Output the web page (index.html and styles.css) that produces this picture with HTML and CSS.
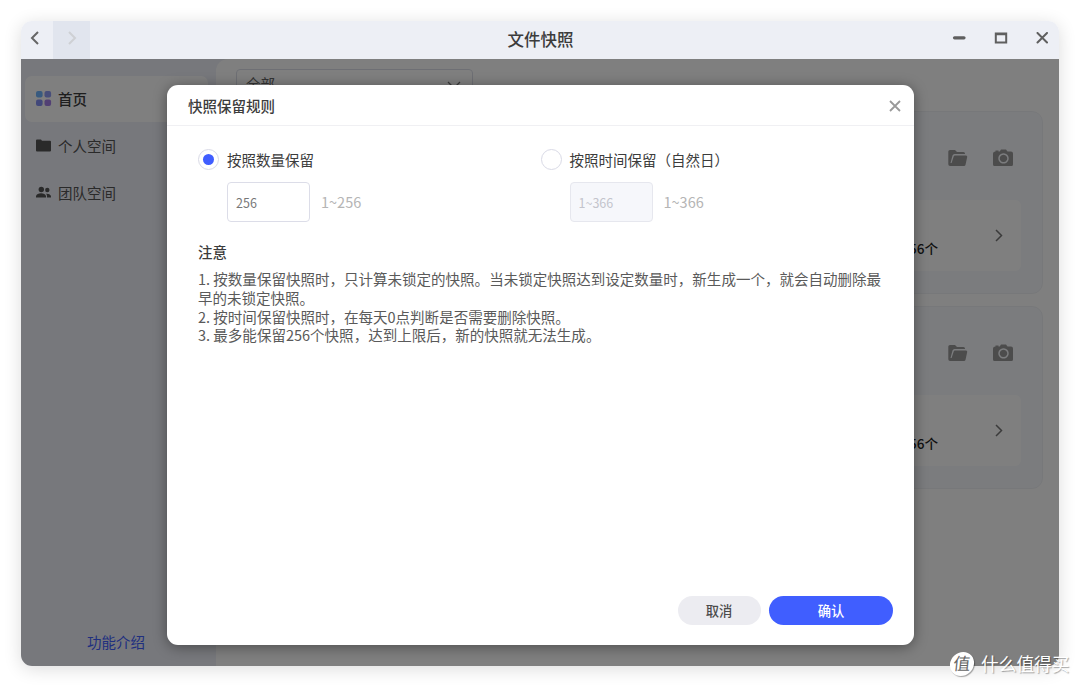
FILE: index.html
```
<!DOCTYPE html>
<html lang="zh-CN">
<head>
    <meta charset="UTF-8">
    <meta name="viewport" content="width=device-width, initial-scale=1.0">
    <title>文件快照</title>
    <link rel="stylesheet" href="styles.css">
</head>
<body>
    <svg class="symbols" width="0" height="0">
        <symbol id="folder-open" viewBox="0 0 20 18">
            <path d="M2 1h5l2 2h6.500q1.500 0 1.500 1.500V5H6.500Q5 5 4.500 6.500L2.500 14H3.600L5.700 7.500Q6 6.500 7 6.500h11q1.500 0 1.200 1.500l-1.600 7.500Q17.300 17 16 17H2Q.3 17 .3 15.300V2.600Q.3 1 2 1z"/>
        </symbol>
        <symbol id="camera" viewBox="0 0 20 18">
            <path fill-rule="evenodd" d="M2.500 1.500h3v1h1.200L8 .5h5l1.500 2H18q2 0 2 2V15.500q0 1.500-1.500 1.500h-17Q0 17 0 15.500v-11q0-2 2.500-2zM10.500 4.200a5.200 5.200 0 1 0 .01 0zM10.500 5.700a3.700 3.700 0 1 1-.01 0z"/>
        </symbol>
        <symbol id="chevron" viewBox="0 0 8 13">
            <path d="M1 1l5.500 5.500L1 12" fill="none" stroke="currentColor" stroke-width="1.500"/>
        </symbol>
    </svg>

    <div class="window">
        <div class="titlebar">
            <div class="nav-button">
                <svg width="10" height="14" viewBox="0 0 10 14"><path d="M8 1L2 7l6 6"/></svg>
            </div>
            <div class="nav-button disabled">
                <svg width="10" height="14" viewBox="0 0 10 14"><path d="M2 1l6 6-6 6"/></svg>
            </div>
            <div class="title">文件快照</div>
            <div class="window-buttons">
                <svg width="14" height="12" viewBox="0 0 14 12"><path class="thick" d="M2.500 5.800h9.500"/></svg>
                <svg width="14" height="12" viewBox="0 0 14 12"><path d="M1.800 1.500h10.400v9H1.800zM1.800 2.200h10.400"/></svg>
                <svg width="14" height="12" viewBox="0 0 14 12"><path d="M2.500 1l9.500 9.500M12 1L2.500 10.500" stroke-linecap="round"/></svg>
            </div>
        </div>

        <div class="content">
            <div class="sidebar">
                <div class="menu-item active">
                    <svg width="16" height="16" viewBox="0 0 16 16">
                        <rect x="0" y="0" width="6.600" height="6.600" rx="2" fill="#70b5ff"/>
                        <rect x="8.500" y="0" width="6.600" height="6.600" rx="2" fill="#8f9cf5"/>
                        <rect x="0" y="8.500" width="6.600" height="6.600" rx="2" fill="#8590f5"/>
                        <rect x="8.500" y="8.500" width="6.600" height="6.600" rx="2" fill="#a580e8"/>
                    </svg>
                    <span>首页</span>
                </div>
                <div class="menu-item">
                    <svg width="16" height="16" viewBox="0 0 16 16"><path d="M1 1.500h4l1 1.200h8q1 0 1 1V12.500q0 1-1 1H1q-1 0-1-1V2.500q0-1 1-1z"/></svg>
                    <span>个人空间</span>
                </div>
                <div class="menu-item">
                    <svg width="16" height="16" viewBox="0 0 16 16"><circle cx="5.300" cy="4.500" r="2.700"/><circle cx="11.300" cy="5" r="2.200"/><path d="M0 12.500v-1.500Q1 8.300 5 8.300t5 2.700v1.500zM10 8.800Q14.500 8.500 15 11.500v1h-4v-1.500Q11 9.700 10 8.800z"/></svg>
                    <span>团队空间</span>
                </div>
                <a class="intro-link">功能介绍</a>
            </div>

            <div class="main">
                <div class="select">
                    <span>全部</span>
                    <svg width="14" height="8" viewBox="0 0 14 8"><path d="M1 1l6 6 6-6"/></svg>
                </div>
                <div class="card">
                    <div class="card-actions">
                        <svg width="20" height="18"><use href="#folder-open"/></svg>
                        <svg width="20" height="18"><use href="#camera"/></svg>
                    </div>
                    <div class="card-info">
                        <span class="count">256个</span>
                        <svg width="8" height="13"><use href="#chevron"/></svg>
                    </div>
                </div>
                <div class="card">
                    <div class="card-actions">
                        <svg width="20" height="18"><use href="#folder-open"/></svg>
                        <svg width="20" height="18"><use href="#camera"/></svg>
                    </div>
                    <div class="card-info">
                        <span class="count">256个</span>
                        <svg width="8" height="13"><use href="#chevron"/></svg>
                    </div>
                </div>
            </div>

            <div class="overlay">
                <div class="dialog">
                    <div class="dialog-header">
                        <h2>快照保留规则</h2>
                        <svg width="12" height="12" viewBox="0 0 12 12"><path d="M1 1l10 10M11 1L1 11"/></svg>
                    </div>
                    <div class="dialog-body">
                        <div class="options">
                            <div class="option">
                                <label><span class="radio checked"></span>按照数量保留</label>
                                <div class="field">
                                    <input type="text" value="256">
                                    <span>1~256</span>
                                </div>
                            </div>
                            <div class="option">
                                <label><span class="radio"></span>按照时间保留（自然日）</label>
                                <div class="field">
                                    <input type="text" placeholder="1~366" disabled>
                                    <span>1~366</span>
                                </div>
                            </div>
                        </div>
                        <h3>注意</h3>
                        <p>1. 按数量保留快照时，只计算未锁定的快照。当未锁定快照达到设定数量时，新生成一个，就会自动删除最早的未锁定快照。</p>
                        <p>2. 按时间保留快照时，在每天0点判断是否需要删除快照。</p>
                        <p>3. 最多能保留256个快照，达到上限后，新的快照就无法生成。</p>
                    </div>
                    <div class="dialog-footer">
                        <button class="cancel">取消</button>
                        <button class="confirm">确认</button>
                    </div>
                </div>
            </div>
        </div>
    </div>

    <div class="watermark">
        <span class="watermark-logo">值</span>
        <span>什么值得买</span>
    </div>
</body>
</html>
```
FILE: styles.css
```
* {
    box-sizing: border-box;
}
body {
    margin: 0;
    padding: 21px;
    height: 687px;
    overflow: hidden;
    background: #fff;
    font-family: "Noto Sans CJK SC", sans-serif;
    font-size: 14.5px;
    color: #3c3c3c;
}
svg {
    display: block;
    flex: none;
}
.symbols {
    position: absolute;
}
.window {
    width: 1038px;
    height: 645px;
    border-radius: 11px;
    background: #fff;
    overflow: hidden;
    box-shadow: 0 3px 18px rgba(0, 0, 0, 0.14);
}
.titlebar {
    display: flex;
    height: 38px;
    background: #edeff5;
}
.nav-button {
    display: flex;
    align-items: center;
    justify-content: center;
    width: 37px;
    height: 38px;
    padding-bottom: 4px;
}
.nav-button:first-child {
    width: 32px;
    padding-right: 4px;
}
.nav-button.disabled {
    background: #e1e5ee;
}
.nav-button path {
    fill: none;
    stroke: #666;
    stroke-width: 2;
}
.nav-button.disabled path {
    stroke: #ced0d4;
}
.title {
    flex: 1;
    padding-left: 39px;
    text-align: center;
    line-height: 37px;
    font-size: 16.5px;
    font-weight: 500;
}
.window-buttons {
    display: flex;
    align-items: center;
    gap: 27.5px;
    padding-right: 10px;
    padding-bottom: 5px;
}
.window-buttons path {
    fill: none;
    stroke: #5f5f5f;
    stroke-width: 2;
}
.window-buttons .thick {
    stroke-width: 3.2;
    stroke-linecap: round;
}
.content {
    position: relative;
    display: flex;
    height: 607px;
    background: #eff1f9;
}
.sidebar {
    display: flex;
    flex-direction: column;
    width: 195px;
    padding: 17px 8px 13px 4px;
}
.menu-item {
    display: flex;
    align-items: center;
    gap: 6px;
    height: 46px;
    margin-bottom: 1px;
    padding-left: 11px;
    border-radius: 7px;
    color: #555;
}
.menu-item span {
    padding-bottom: 2px;
}
.menu-item path,
.menu-item circle {
    fill: #555;
}
.menu-item.active {
    background: #fff;
    color: #3c3c3c;
    font-weight: 500;
}
.intro-link {
    margin: auto 0 0 62px;
    line-height: 22px;
    color: #405eff;
}
.main {
    flex: 1;
    padding: 10px 16px 0 20px;
    border-top-left-radius: 12px;
    background: #fff;
}
.select {
    display: flex;
    align-items: center;
    justify-content: space-between;
    width: 237px;
    height: 31px;
    margin-bottom: 11px;
    padding: 0 11px 0 9px;
    border: 1px solid #dcdfe9;
    border-radius: 4px;
    color: #666;
}
.select span {
    padding-bottom: 2px;
}
.select path {
    fill: none;
    stroke: #777;
    stroke-width: 1.3;
}
.card {
    height: 183px;
    margin-bottom: 12px;
    padding: 37px 21px 0;
    border: 1px solid #eff1f5;
    border-radius: 11px;
    background: #f7f9fd;
}
.card-actions {
    display: flex;
    justify-content: flex-end;
    gap: 25px;
    height: 51px;
    padding-right: 8px;
    fill: #999;
}
.card-info {
    display: flex;
    align-items: center;
    justify-content: flex-end;
    gap: 57px;
    height: 71px;
    padding-right: 18px;
    border-radius: 6px;
    background: #fff;
    color: #777;
}
.count {
    padding-top: 25px;
    font-size: 13.6px;
    font-weight: 500;
    color: #222;
}
.overlay {
    position: absolute;
    inset: 0;
    padding: 26px 0 0 146px;
    background: rgba(0, 0, 0, 0.5);
}
.dialog {
    display: flex;
    flex-direction: column;
    width: 747px;
    height: 560px;
    border-radius: 11px;
    background: #fff;
    box-shadow: 0 2px 14px rgba(0, 0, 0, 0.4);
}
.dialog-header {
    display: flex;
    align-items: center;
    justify-content: space-between;
    height: 41px;
    padding: 2px 13px 0 21px;
    border-bottom: 1px solid #f0f0f3;
}
.dialog-header path {
    stroke: #999;
    stroke-width: 1.8;
}
h2,
h3 {
    margin: 0;
    font-size: 14.5px;
    font-weight: 500;
}
.dialog-header h2 {
    padding-bottom: 2px;
}
.dialog-body {
    flex: 1;
    padding: 22px 29px 0 31px;
}
.options {
    display: grid;
    grid-template-columns: 342.5px 1fr;
}
.option label {
    display: flex;
    align-items: center;
    gap: 8px;
    height: 22px;
}
.radio {
    display: flex;
    align-items: center;
    justify-content: center;
    width: 21px;
    height: 21px;
    border: 1px solid #d9dae6;
    border-radius: 50%;
}
.radio.checked::after {
    content: "";
    width: 11px;
    height: 11px;
    border-radius: 50%;
    background: #405eff;
}
.field {
    display: flex;
    align-items: center;
    gap: 11px;
    margin: 12px 0 0 29px;
    color: #b5b5b5;
}
.field span {
    padding-bottom: 2px;
}
.field input {
    width: 83px;
    height: 40px;
    padding: 0 8px;
    border: 1px solid #dcdde8;
    border-radius: 4px;
    background: #fff;
    font-family: inherit;
    font-size: 12.5px;
    color: #777;
}
.field input:disabled {
    border-color: #e6e7ee;
    background: #f6f7fb;
}
.field input::placeholder {
    color: #c3c4cc;
}
h3 {
    margin: 19px 0 7px;
    line-height: 22px;
}
p {
    margin: 0;
    line-height: 18.8px;
    font-size: 14.53px;
    color: #5a5a5a;
}
.dialog-footer {
    display: flex;
    justify-content: flex-end;
    gap: 8.5px;
    padding: 0 21px 20px;
}
button {
    width: 83px;
    height: 29px;
    padding: 0 0 1px;
    border: none;
    border-radius: 15px;
    font-family: inherit;
    font-size: 13.3px;
    font-weight: 500;
}
.cancel {
    background: #ececf1;
    color: #4c4c4c;
}
.confirm {
    width: 124px;
    background: #405eff;
    color: #fff;
}
.watermark {
    position: absolute;
    left: 950px;
    top: 651px;
    display: flex;
    align-items: center;
    gap: 7px;
    height: 25px;
    font-size: 17.7px;
    color: #fff;
    white-space: nowrap;
    text-shadow: 1px 1px 1px rgba(0, 0, 0, 0.35);
}
.watermark > span:last-child {
    padding-bottom: 2px;
}
.watermark-logo {
    width: 24px;
    height: 24px;
    border-radius: 50%;
    background: #fff;
    box-shadow: 1px 1px 1px rgba(0, 0, 0, 0.35);
    line-height: 22px;
    text-align: center;
    font-size: 17px;
    color: #666;
    text-shadow: none;
    transform: skewX(-6deg);
}
```
